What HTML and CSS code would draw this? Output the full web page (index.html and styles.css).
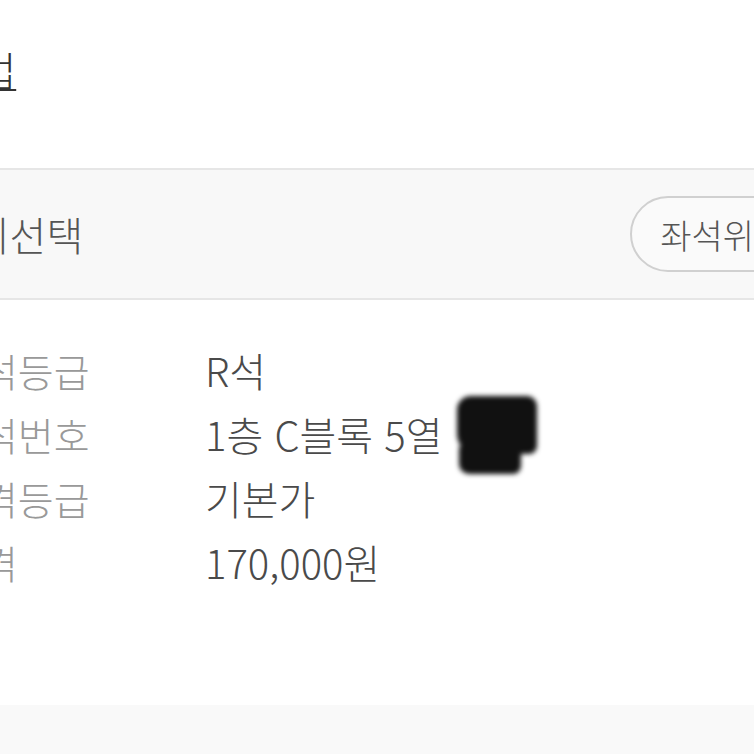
FILE: index.html
```html
<!DOCTYPE html>
<html lang="ko">
   <head>
      <meta charset="UTF-8">
      <meta name="viewport" content="width=device-width, initial-scale=1.0">
      <title>좌석 정보</title>
      <link rel="stylesheet" href="styles.css">
   </head>
   <body>
      <div class="page">
         <div class="top">
            <a class="title-link" href="#">관람방법</a>
         </div>
         <div class="seat-bar">
            <span class="seat-bar-label">자리선택</span>
            <button class="seat-btn">좌석위치보기</button>
         </div>
         <div class="info">
            <div class="info-row">
               <span class="info-label">좌석등급</span>
               <span class="info-value">R석</span>
            </div>
            <div class="info-row">
               <span class="info-label">좌석번호</span>
               <span class="info-value">1층 C블록 5열 <span class="scribble"></span></span>
            </div>
            <div class="info-row">
               <span class="info-label">가격등급</span>
               <span class="info-value">기본가</span>
            </div>
            <div class="info-row">
               <span class="info-label">가격</span>
               <span class="info-value">170,000원</span>
            </div>
         </div>
         <div class="footer-band"></div>
      </div>
   </body>
</html>
```

FILE: styles.css
```css
body {
margin: 0;
padding: 0;
background-color: #fff;
font-family: "Noto Sans CJK KR", "Noto Sans", sans-serif;
font-weight: 300;
overflow: hidden;
}
.page {
width: 754px;
height: 754px;
overflow: hidden;
}
.top {
height: 168px;
display: flex;
align-items: center;
padding-bottom: 30px;
box-sizing: border-box;
}
.title-link {
margin-left: -131px;
font-size: 40px;
color: #333;
text-decoration: underline;
text-decoration-thickness: 2px;
text-underline-offset: 3px;
white-space: nowrap;
}
.seat-bar {
height: 132px;
box-sizing: border-box;
background-color: #f8f8f8;
border-top: 2px solid #e6e6e6;
border-bottom: 2px solid #e6e6e6;
display: flex;
align-items: center;
justify-content: space-between;
}
.seat-bar-label {
margin-left: -64px;
font-size: 40px;
color: #555;
white-space: nowrap;
}
.seat-btn {
margin-right: -124px;
height: 76px;
padding: 0 28px;
border: 2px solid #d0d0d0;
border-radius: 40px;
background-color: #fafafa;
font-family: inherit;
font-weight: 300;
font-size: 34px;
color: #555;
white-space: nowrap;
}
.info {
padding: 38px 0 111px;
}
.info-row {
display: grid;
grid-template-columns: 259px 1fr;
margin-left: -54px;
height: 64px;
line-height: 64px;
font-size: 39px;
white-space: nowrap;
}
.info-label {
color: #999;
}
.info-value {
color: #4a4a4a;
font-size: 40px;
position: relative;
}
.scribble {
position: absolute;
left: 252px;
top: -6px;
width: 80px;
height: 58px;
background-color: #111;
border-radius: 14px 10px 8px 20px;
filter: blur(2.5px);
}
.scribble::after {
content: "";
position: absolute;
left: 2px;
top: 50px;
width: 62px;
height: 28px;
background-color: #111;
border-radius: 2px 2px 8px 10px;
}
.footer-band {
height: 60px;
background-color: #f9f9f9;
}
```
